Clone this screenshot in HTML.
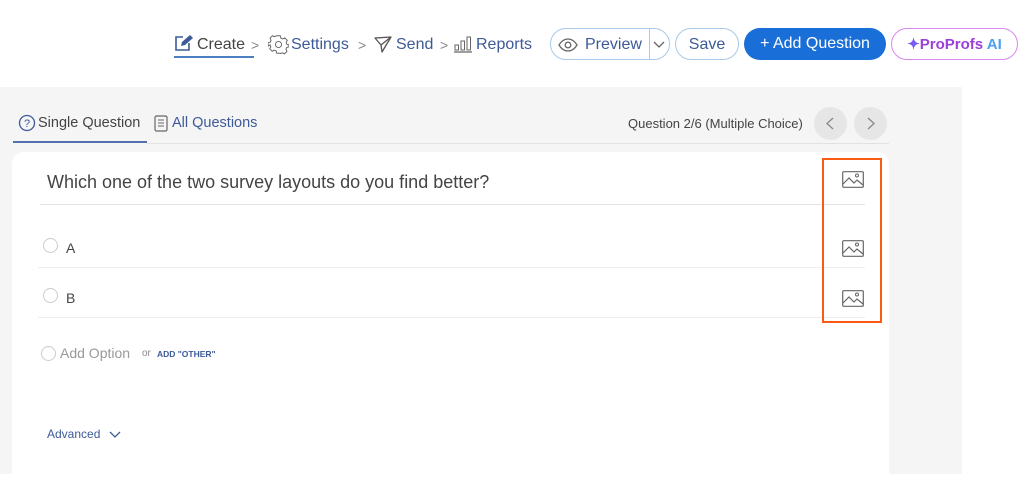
<!DOCTYPE html>
<html><head><meta charset="utf-8"><style>
*{margin:0;padding:0;box-sizing:border-box}
body{width:1024px;height:474px;overflow:hidden;background:#fff;font-family:"Liberation Sans",sans-serif;position:relative}
.a{position:absolute;white-space:nowrap}
.nav{font-size:16px;color:#3d5a98;top:35px;line-height:20px}
.chev{color:#888;font-size:14px;top:37px}
.btn{position:absolute;top:28px;height:32px;border-radius:16px;font-size:16px;line-height:32px;text-align:center}
.img{position:absolute;left:842px;width:22px;height:17px}
</style></head><body>
<div class="a" style="left:0;top:87px;width:962px;height:387px;background:#f5f5f5"></div>

<svg class="a" style="left:174px;top:34px" width="20" height="18" viewBox="0 0 20 18"><path d="M9 3H2v13h13V9" fill="none" stroke="#3d5a98" stroke-width="1.6"/><path d="M7 12l1-4 8-7 3 3-8 7z" fill="#3d5a98"/></svg>
<div class="a nav" style="left:197px;color:#444">Create</div>
<div class="a" style="left:174px;top:56px;width:80px;height:2px;background:#4a7fc1"></div>
<div class="a chev" style="left:251px">&gt;</div>
<svg class="a" style="left:268px;top:34px" width="21" height="21" viewBox="0 0 24 24"><path d="M12 8.5a3.5 3.5 0 1 0 0 7 3.5 3.5 0 0 0 0-7zM10 2h4l.6 2.6 2.2 1.1 2.4-1.2 2.8 2.8-1.2 2.4.9 2.3L24 12.7v-1.4 3.4l-2.6.6-.9 2.2 1.2 2.4-2.8 2.8-2.4-1.2-2.2.9L14 22h-4l-.6-2.6-2.2-.9-2.4 1.2-2.8-2.8 1.2-2.4-.9-2.2L0 14v-4l2.6-.6.9-2.3-1.2-2.4 2.8-2.8 2.4 1.2 2.2-1.1z" fill="none" stroke="#666" stroke-width="1.1"/></svg>
<div class="a nav" style="left:291px">Settings</div>
<div class="a chev" style="left:358px">&gt;</div>
<svg class="a" style="left:374px;top:36px" width="18" height="17" viewBox="0 0 18 17"><path d="M1 2L17 1 8 16 7 9zM7 9L17 1" fill="none" stroke="#555" stroke-width="1.3" stroke-linejoin="round"/></svg>
<div class="a nav" style="left:396px">Send</div>
<div class="a chev" style="left:440px">&gt;</div>
<svg class="a" style="left:453px;top:36px" width="20" height="17" viewBox="0 0 20 17"><path d="M1 16h18" stroke="#666" stroke-width="1.2"/><rect x="2" y="9" width="3.5" height="5" fill="none" stroke="#666"/><rect x="8" y="5" width="3.5" height="9" fill="none" stroke="#666"/><rect x="14" y="1" width="3.5" height="13" fill="none" stroke="#666"/></svg>
<div class="a nav" style="left:476px">Reports</div>

<div class="btn" style="left:550px;width:120px;border:1px solid #a9c9e8;color:#3d5a98">
<svg class="a" style="left:7px;top:9px" width="20" height="14" viewBox="0 0 20 14"><path d="M1 7C4 2 7 1 10 1s6 1 9 6c-3 5-6 6-9 6S4 12 1 7z" fill="none" stroke="#666" stroke-width="1.3"/><circle cx="10" cy="7" r="2.8" fill="none" stroke="#666" stroke-width="1.3"/></svg>
<span class="a" style="left:34px;top:0">Preview</span>
<span class="a" style="left:98px;top:0;width:1px;height:30px;background:#a9c9e8"></span>
<svg class="a" style="left:102px;top:12px" width="12" height="8" viewBox="0 0 12 8"><path d="M1 1l5 5 5-5" fill="none" stroke="#666" stroke-width="1.3"/></svg>
</div>
<div class="btn" style="left:675px;width:64px;border:1px solid #a9c9e8;color:#3d5a98">Save</div>
<div class="btn" style="left:744px;width:142px;background:#1a6ed8;color:#fff">+ Add Question</div>
<div class="btn" style="left:891px;width:127px;border:1px solid #d987f0;color:#9b3fd8;font-weight:bold;font-size:15px"><span style="color:#7a5cf0">✦</span>ProProfs <span style="color:#4aa0f0">AI</span></div>

<svg class="a" style="left:18px;top:114px" width="18" height="18" viewBox="0 0 18 18"><circle cx="9" cy="9" r="7.5" fill="none" stroke="#3d5a98" stroke-width="1.3"/><text x="9" y="13" font-size="11" text-anchor="middle" fill="#3d5a98" font-family="Liberation Sans">?</text></svg>
<div class="a" style="left:38px;top:115px;font-size:14.5px;color:#444">Single Question</div>
<div class="a" style="left:13px;top:141px;width:134px;height:2px;background:#5470b0"></div>
<div class="a" style="left:147px;top:143px;width:742px;height:1px;background:#e2e2e2"></div>
<svg class="a" style="left:154px;top:115px" width="14" height="17" viewBox="0 0 14 17"><rect x="1" y="1" width="12" height="15" rx="1.5" fill="none" stroke="#666" stroke-width="1.2"/><path d="M4 5h6M4 8h6M4 11h6" stroke="#666"/></svg>
<div class="a" style="left:172px;top:115px;font-size:14.5px;color:#3d5a98">All Questions</div>
<div class="a" style="left:628px;top:116px;font-size:13px;color:#444">Question 2/6 (Multiple Choice)</div>
<div class="a" style="left:814px;top:107px;width:33px;height:33px;border-radius:50%;background:#e6e6e6"></div>
<div class="a" style="left:854px;top:107px;width:33px;height:33px;border-radius:50%;background:#e6e6e6"></div>
<svg class="a" style="left:826px;top:117px" width="8" height="13" viewBox="0 0 8 13"><path d="M7 1L1 6.5 7 12" fill="none" stroke="#888" stroke-width="1.3"/></svg>
<svg class="a" style="left:867px;top:117px" width="8" height="13" viewBox="0 0 8 13"><path d="M1 1l6 5.5L1 12" fill="none" stroke="#888" stroke-width="1.3"/></svg>

<div class="a" style="left:12px;top:152px;width:877px;height:340px;background:#fff;border-radius:12px"></div>
<div class="a" style="left:47px;top:172px;font-size:18px;color:#444">Which one of the two survey layouts do you find better?</div>
<div class="a" style="left:40px;top:204px;width:825px;height:1px;background:#e2e2e2"></div>
<div class="a" style="left:43px;top:238px;width:15px;height:15px;border-radius:50%;border:1px solid #ccc"></div>
<div class="a" style="left:66px;top:240px;font-size:14px;color:#444">A</div>
<div class="a" style="left:38px;top:267px;width:827px;height:1px;background:#eee"></div>
<div class="a" style="left:43px;top:288px;width:15px;height:15px;border-radius:50%;border:1px solid #ccc"></div>
<div class="a" style="left:66px;top:290px;font-size:14px;color:#444">B</div>
<div class="a" style="left:38px;top:317px;width:827px;height:1px;background:#eee"></div>
<div class="a" style="left:41px;top:346px;width:15px;height:15px;border-radius:50%;border:1px solid #ccc"></div>
<div class="a" style="left:60px;top:345px;font-size:14px;color:#999">Add Option</div>
<div class="a" style="left:142px;top:348px;font-size:10px;color:#888">or</div>
<div class="a" style="left:157px;top:349px;font-size:8.5px;color:#3d5a98;font-weight:bold">ADD "OTHER"</div>
<div class="a" style="left:47px;top:427px;font-size:12px;color:#3d5a98">Advanced</div>
<svg class="a" style="left:109px;top:431px" width="12" height="8" viewBox="0 0 12 8"><path d="M1 1l5 5 5-5" fill="none" stroke="#3d5a98" stroke-width="1.3"/></svg>

<svg class="img" style="top:171px" viewBox="0 0 22 17"><rect x="0.7" y="0.7" width="20.6" height="15.6" rx="1" fill="none" stroke="#666" stroke-width="1.2"/><path d="M1 13l6-6 5 5 3-3 6 5" fill="none" stroke="#666" stroke-width="1.2"/><circle cx="15" cy="4.5" r="1.5" fill="none" stroke="#666"/></svg>
<svg class="img" style="top:240px" viewBox="0 0 22 17"><rect x="0.7" y="0.7" width="20.6" height="15.6" rx="1" fill="none" stroke="#666" stroke-width="1.2"/><path d="M1 13l6-6 5 5 3-3 6 5" fill="none" stroke="#666" stroke-width="1.2"/><circle cx="15" cy="4.5" r="1.5" fill="none" stroke="#666"/></svg>
<svg class="img" style="top:290px" viewBox="0 0 22 17"><rect x="0.7" y="0.7" width="20.6" height="15.6" rx="1" fill="none" stroke="#666" stroke-width="1.2"/><path d="M1 13l6-6 5 5 3-3 6 5" fill="none" stroke="#666" stroke-width="1.2"/><circle cx="15" cy="4.5" r="1.5" fill="none" stroke="#666"/></svg>
<div class="a" style="left:822px;top:158px;width:60px;height:165px;border:2px solid #fa5a14"></div>
</body></html>
